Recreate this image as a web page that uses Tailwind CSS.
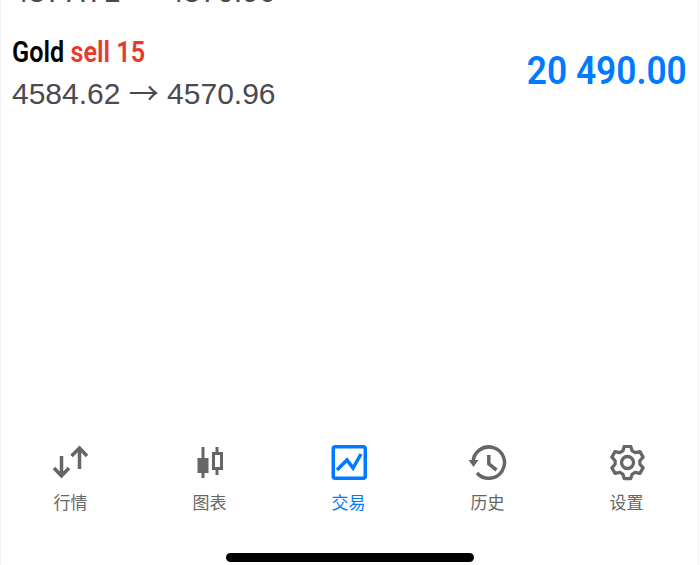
<!DOCTYPE html>
<html lang="en">
<head>
    <meta charset="UTF-8">
    <title>交易</title>
    <script src="https://cdn.jsdelivr.net/npm/@tailwindcss/browser@4"></script>
</head>
<body class="bg-white">
    <div class="w-[699px] h-[565px] overflow-hidden flex flex-col bg-white border-x border-[#f5f5f5] font-['Liberation_Sans','Noto_Sans_CJK_SC',sans-serif]">
        <!-- previous row, scrolled off the top -->
        <p class="shrink-0 -mt-[26px] pl-[11px] text-[30px] leading-[36px] text-[#4a4a50] whitespace-pre">4577.71 <span class="leading-none font-['Noto_Sans_CJK_SC',sans-serif]">→</span> 4570.96</p>

        <!-- position row -->
        <div class="flex justify-between pt-[20px] pl-[11px] pr-[11px] shrink-0">
            <div>
                <p class="mb-[2px] text-[30px] leading-[44px] font-['Roboto',sans-serif] font-semibold scale-x-[0.84] origin-left text-black whitespace-pre">Gold <span class="text-[#e8392c]">sell 15</span></p>
                <p class="text-[30px] leading-[36px] text-[#4a4a50] whitespace-pre">4584.62 <span class="leading-none font-['Noto_Sans_CJK_SC',sans-serif]">→</span> 4570.96</p>
            </div>
            <p class="mt-[19px] text-[39px] leading-[44px] font-['Roboto',sans-serif] font-semibold scale-x-[0.905] origin-right text-[#007aff] whitespace-pre">20 490.00</p>
        </div>

        <div class="flex-1"></div>

        <!-- tab bar -->
        <nav class="grid grid-cols-5 h-[86px] pr-[2px] shrink-0">
            <div class="flex flex-col items-center gap-[7px] text-[#666666]">
                <svg class="w-[40px] h-[40px]" viewBox="0 0 40 40" fill="none" stroke="currentColor" stroke-width="3.5">
                    <path d="M10.500 11v20M3 23l7.500 8 7.500-8"/>
                    <path d="M28.500 24V4M20.500 11l8-8 7.500 8"/>
                </svg>
                <span class="text-[17px] leading-[24px]">行情</span>
            </div>
            <div class="flex flex-col items-center gap-[7px] text-[#666666]">
                <svg class="w-[40px] h-[40px]" viewBox="0 0 40 40" fill="none" stroke="currentColor" stroke-width="3">
                    <path d="M13 2v31M27 2v28"/>
                    <rect x="7.500" y="13" width="11" height="15" fill="currentColor" stroke="none"/>
                    <rect x="23.500" y="8.500" width="8" height="15" fill="#ffffff"/>
                </svg>
                <span class="text-[17px] leading-[24px]">图表</span>
            </div>
            <div class="flex flex-col items-center gap-[7px] text-[#007aff]">
                <svg class="w-[40px] h-[40px]" viewBox="0 0 40 40" fill="none" stroke="currentColor" stroke-width="3.500">
                    <rect x="4.250" y="1.750" width="32" height="31.500" rx="2"/>
                    <path d="M8 25l10-10 6 8 8-14"/>
                </svg>
                <span class="text-[17px] leading-[24px]">交易</span>
            </div>
            <div class="flex flex-col items-center gap-[7px] text-[#666666]">
                <svg class="w-[40px] h-[40px]" viewBox="0 0 40 40" fill="none" stroke="currentColor" stroke-width="3.500">
                    <path d="M5.100 17.500a15.700 15.700 0 1 1 3.900 10.500"/>
                    <path d="M0.500 15h10l-5 7z" fill="currentColor" stroke="none"/>
                    <path d="M20.800 10v9l7.700 6"/>
                </svg>
                <span class="text-[17px] leading-[24px]">历史</span>
            </div>
            <div class="flex flex-col items-center gap-[7px] text-[#666666]">
                <svg class="w-[40px] h-[40px]" viewBox="0 0 40 40" fill="none" stroke="currentColor" stroke-width="3.300" stroke-linejoin="round">
                    <g transform="translate(20.500 17.500)">
                        <path d="M-4.680-11.590L-3.150-16.200 3.150-16.200 4.680-11.590 7.700-9.850 12.450-10.830 15.610-5.370 12.380-1.750 12.380 1.750 15.610 5.370 12.450 10.830 7.700 9.850 4.680 11.590 3.150 16.200-3.150 16.200-4.680 11.590-7.700 9.850-12.450 10.830-15.610 5.370-12.380 1.750-12.380-1.750-15.610-5.370-12.450-10.830-7.700-9.850Z"/>
                        <circle r="6"/>
                    </g>
                </svg>
                <span class="text-[17px] leading-[24px]">设置</span>
            </div>
        </nav>

        <!-- home indicator -->
        <div class="h-[34px] shrink-0 flex justify-center pt-[22px]">
            <div class="w-[248px] h-[9px] rounded-full bg-black"></div>
        </div>
    </div>
</body>
</html>
